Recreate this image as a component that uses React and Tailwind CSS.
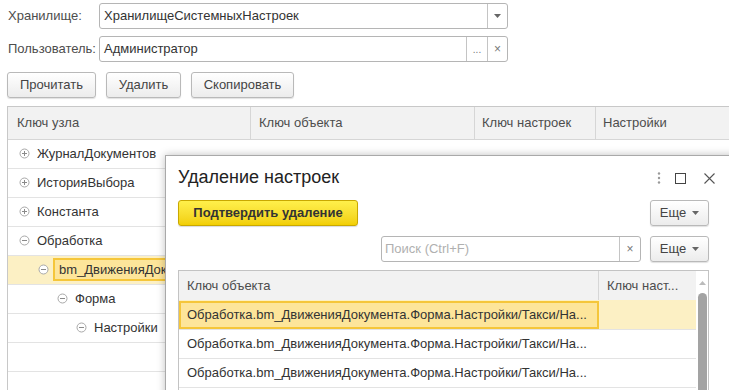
import React from "react";

const font = { fontFamily: '"Liberation Sans", Arial, sans-serif' };

function TreeIcon({ open }) {
  return (
    <svg width="11" height="11" viewBox="0 0 11 11" className="shrink-0">
      <circle cx="5.5" cy="5.5" r="4.5" fill="white" stroke="#a8a8a8" strokeWidth="1" />
      <line x1="3" y1="5.5" x2="8" y2="5.5" stroke="#8a8a8a" strokeWidth="1" />
      {!open && <line x1="5.5" y1="3" x2="5.5" y2="8" stroke="#8a8a8a" strokeWidth="1" />}
    </svg>
  );
}

function Btn({ children, w }) {
  return (
    <div
      className={`h-[26px] ${w} flex items-center justify-center rounded-[3px] border border-[#b9b9b9] bg-gradient-to-b from-white to-[#ececec] shadow-[0_1px_1px_rgba(0,0,0,0.12)] text-[#444]`}
    >
      {children}
    </div>
  );
}

function MoreBtn() {
  return (
    <div className="h-[26px] w-[59px] flex items-center justify-center gap-[6px] rounded-[3px] border border-[#b9b9b9] bg-gradient-to-b from-white to-[#ececec] shadow-[0_1px_1px_rgba(0,0,0,0.12)] text-[#444]">
      <span>Еще</span>
      <svg width="7" height="4" viewBox="0 0 7 4"><path d="M0 0h7L3.5 4z" fill="#666" /></svg>
    </div>
  );
}

const treeRows = [
  { t: "ЖурналДокументов", lvl: 0, open: false },
  { t: "ИсторияВыбора", lvl: 0, open: false },
  { t: "Константа", lvl: 0, open: false },
  { t: "Обработка", lvl: 0, open: true },
  { t: "bm_ДвиженияДокумента", lvl: 1, open: true, sel: true },
  { t: "Форма", lvl: 2, open: true },
  { t: "Настройки", lvl: 3, open: true },
  { t: "", lvl: 0, empty: true },
  { t: "", lvl: 0, empty: true },
];

const rowText = "Обработка.bm_ДвиженияДокумента.Форма.Настройки/Такси/На...";

export default function App() {
  return (
    <div style={font} className="relative w-[729px] h-[390px] overflow-hidden bg-white text-[13px] text-[#4d4d4d]">
      {/* Row 1 */}
      <div className="flex items-center h-[26px] mt-[3px] pl-[8px]">
        <div className="w-[91px]">Хранилище:</div>
        <div className="flex h-[26px] w-[409px] rounded-[3px] border border-[#b5b5b5] bg-white">
          <div className="flex-1 flex items-center pl-[4px] text-[#333]">ХранилищеСистемныхНастроек</div>
          <div className="w-[20px] border-l border-[#c4c4c4] flex items-center justify-center">
            <svg width="7" height="4" viewBox="0 0 7 4"><path d="M0 0h7L3.5 4z" fill="#666" /></svg>
          </div>
        </div>
      </div>
      {/* Row 2 */}
      <div className="flex items-center h-[26px] mt-[7px] pl-[8px]">
        <div className="w-[91px]">Пользователь:</div>
        <div className="flex h-[26px] w-[409px] rounded-[3px] border border-[#b5b5b5] bg-white">
          <div className="flex-1 flex items-center pl-[4px] text-[#333]">Администратор</div>
          <div className="w-[21px] border-l border-[#c4c4c4] flex items-end justify-center pb-[6px] text-[10px] text-[#777] leading-none">...</div>
          <div className="w-[20px] border-l border-[#c4c4c4] flex items-center justify-center text-[#777] text-[12px]">×</div>
        </div>
      </div>
      {/* Buttons */}
      <div className="flex gap-[10px] mt-[10px] pl-[7px]">
        <Btn w="w-[89px]">Прочитать</Btn>
        <Btn w="w-[75px]">Удалить</Btn>
        <Btn w="w-[103px]">Скопировать</Btn>
      </div>
      {/* Tree table */}
      <div className="mt-[8px] ml-[7px] border-l border-t border-[#c8c8c8] h-[400px]">
        <div className="flex h-[33px] bg-[#f2f2f2] border-b border-[#d6d6d6] text-[#4d4d4d]">
          <div className="w-[243px] pl-[9px] flex items-center border-r border-[#d6d6d6]">Ключ узла</div>
          <div className="w-[224px] pl-[8px] flex items-center border-r border-[#d6d6d6]">Ключ объекта</div>
          <div className="w-[121px] pl-[7px] flex items-center border-r border-[#d6d6d6]">Ключ настроек</div>
          <div className="flex-1 pl-[7px] flex items-center">Настройки</div>
        </div>
        {treeRows.map((r, i) => (
          <div
            key={i}
            className={`h-[29px] flex items-center border-b border-[#e3e3e3] pb-[1px] ${r.sel ? "bg-[#fcf0c4]" : ""}`}
          >
            {!r.empty && (
              <div className="flex items-center h-full" style={{ paddingLeft: 11 + r.lvl * 19 }}>
                <TreeIcon open={r.open} />
                {r.sel ? (
                  <div className="ml-[4px] h-[23px] w-[200px] flex items-center pl-[4px] border-2 border-[#f5c63a] bg-[#fde59a] text-[#333]">
                    {r.t}
                  </div>
                ) : (
                  <div className="ml-[7px] text-[#333]">{r.t}</div>
                )}
              </div>
            )}
          </div>
        ))}
      </div>

      {/* Dialog */}
      <div className="absolute left-[165px] top-[155px] w-[580px] h-[260px] bg-white border border-[#a9a9a9] shadow-[0_0_8px_rgba(0,0,0,0.25)]">
        <div className="w-[564px]">
          <div className="h-[44px] flex items-center pl-[12px] pr-[15px]">
            <div className="flex-1 text-[18px] text-[#222] pb-[1px]">Удаление настроек</div>
            <div className="flex items-center">
              <svg width="4" height="12" viewBox="0 0 4 12" className="mr-[14px]">
                <circle cx="2" cy="1.5" r="1.2" fill="#999" />
                <circle cx="2" cy="6" r="1.2" fill="#999" />
                <circle cx="2" cy="10.5" r="1.2" fill="#999" />
              </svg>
              <svg width="11" height="11" viewBox="0 0 11 11" className="mr-[18px]">
                <rect x="0.5" y="0.5" width="10" height="10" fill="none" stroke="#444" />
              </svg>
              <svg width="11" height="11" viewBox="0 0 11 11">
                <path d="M0.5 0.5L10.5 10.5M10.5 0.5L0.5 10.5" stroke="#555" strokeWidth="1.1" />
              </svg>
            </div>
          </div>
          <div className="flex items-center justify-between pl-[12px] pr-[21px]">
            <div className="h-[26px] w-[180px] flex items-center justify-center rounded-[3px] border border-[#c9a800] bg-gradient-to-b from-[#fff04a] to-[#f2cf00] shadow-[0_1px_1px_rgba(0,0,0,0.15)] font-bold text-[#333]">
              Подтвердить удаление
            </div>
            <MoreBtn />
          </div>
          <div className="flex items-center justify-end mt-[10px] pr-[21px] gap-[9px]">
            <div className="h-[26px] w-[260px] flex rounded-[3px] border border-[#b5b5b5] bg-white">
              <div className="flex-1 flex items-center pl-[3px] text-[#b0b0b0]">Поиск (Ctrl+F)</div>
              <div className="w-[21px] border-l border-[#c4c4c4] flex items-center justify-center text-[#777] text-[12px]">×</div>
            </div>
            <MoreBtn />
          </div>
          {/* inner table */}
          <div className="mt-[8px] ml-[12px] w-[531px] h-[130px] border-l border-t border-r border-[#c3c3c3] flex">
            <div className="w-[517px]">
              <div className="h-[29px] flex bg-[#f2f2f2] text-[#4d4d4d]">
                <div className="w-[420px] pl-[8px] flex items-center border-r border-[#d6d6d6]">Ключ объекта</div>
                <div className="flex-1 pl-[8px] flex items-center">Ключ наст...</div>
              </div>
              <div className="h-[30px] flex border-b border-[#e3e3e3] bg-[#fcf0c4] pt-[1px]">
                <div className="w-[420px] h-[28px] flex items-center pl-[6px] border-2 border-[#f5c63a] bg-[#fde59a] text-[#333]">
                  {rowText}
                </div>
              </div>
              <div className="h-[29px] flex items-center pl-[8px] border-b border-[#e3e3e3] text-[#333]">{rowText}</div>
              <div className="h-[29px] flex items-center pl-[8px] border-b border-[#e3e3e3] text-[#333]">{rowText}</div>
            </div>
            <div className="flex-1 flex flex-col items-center">
              <svg width="7" height="4" viewBox="0 0 7 4" className="mt-[10px]"><path d="M0 4h7L3.5 0z" fill="#bbb" /></svg>
              <div className="mt-[8px] w-[9px] flex-1 rounded-t-[5px] bg-[#a3a3a3]" />
            </div>
          </div>
        </div>
      </div>
    </div>
  );
}
